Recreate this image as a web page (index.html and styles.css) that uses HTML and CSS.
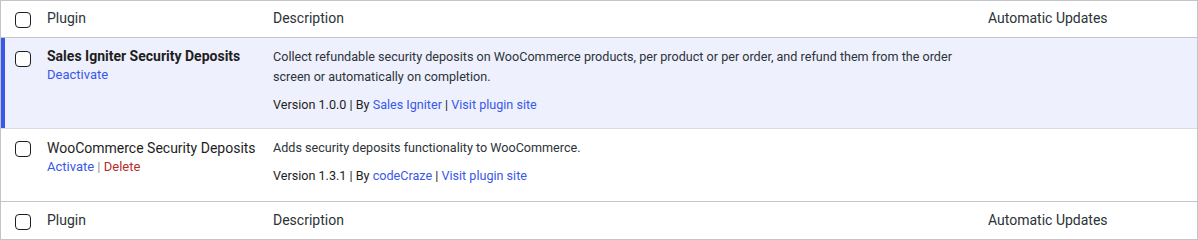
FILE: index.html
```html
<!DOCTYPE html>
<html lang="en">
<head>
  <meta charset="UTF-8">
  <meta name="viewport" content="width=device-width, initial-scale=1.0">
  <title>Plugins</title>
  <link rel="stylesheet" href="styles.css">
</head>
<body>
  <table class="plugins">
    <thead>
      <tr>
        <td class="check-column"><input type="checkbox"></td>
        <th class="col-name">Plugin</th>
        <th class="col-desc">Description</th>
        <th class="col-auto">Automatic Updates</th>
      </tr>
    </thead>
    <tbody>
      <tr class="active">
        <th class="check-column"><input type="checkbox"></th>
        <td class="plugin-title">
          <strong>Sales Igniter Security Deposits</strong>
          <div class="row-actions"><a href="#">Deactivate</a></div>
        </td>
        <td class="column-description">
          <p class="desc">Collect refundable security deposits on WooCommerce products, per product or per order, and refund them from the order screen or automatically on completion.</p>
          <p class="meta">Version 1.0.0 | By <a href="#">Sales Igniter</a> | <a href="#">Visit plugin site</a></p>
        </td>
        <td class="column-auto"></td>
      </tr>
      <tr class="inactive">
        <th class="check-column"><input type="checkbox"></th>
        <td class="plugin-title">
          <strong>WooCommerce Security Deposits</strong>
          <div class="row-actions"><a href="#">Activate</a> | <a href="#" class="delete">Delete</a></div>
        </td>
        <td class="column-description">
          <p class="desc">Adds security deposits functionality to WooCommerce.</p>
          <p class="meta">Version 1.3.1 | By <a href="#">codeCraze</a> | <a href="#">Visit plugin site</a></p>
        </td>
        <td class="column-auto"></td>
      </tr>
    </tbody>
    <tfoot>
      <tr>
        <td class="check-column"><input type="checkbox"></td>
        <th class="col-name">Plugin</th>
        <th class="col-desc">Description</th>
        <th class="col-auto">Automatic Updates</th>
      </tr>
    </tfoot>
  </table>
</body>
</html>
```

FILE: styles.css
```css
body {
  margin: 0;
  font-family: Roboto, "Liberation Sans", sans-serif;
  font-size: 13px;
  color: #1e1e1e;
  background: #fff;
}
.plugins {
  width: 1198px;
  border-collapse: separate;
  border-spacing: 0;
  border: 1px solid #c3c4c7;
  table-layout: fixed;
}
.plugins th,
.plugins td {
  box-sizing: border-box;
  text-align: left;
  font-weight: normal;
  vertical-align: top;
  padding: 0;
}
.plugins .check-column {
  width: 36px;
}
.plugins .col-name {
  width: 226px;
}
.plugins .col-desc {
  width: 715px;
}
.plugins .col-auto {
  width: 219px;
}
.plugins thead th,
.plugins tfoot th {
  font-size: 14px;
  line-height: 20px;
  padding: 7px 10px 9px;
  color: #2c3338;
}
.plugins thead td,
.plugins thead th {
  height: 37px;
  border-bottom: 1px solid #c3c4c7;
}
.plugins tfoot td,
.plugins tfoot th {
  height: 37px;
  border-top: 1px solid #c3c4c7;
}
.plugins tfoot th {
  padding-top: 8px;
}
.plugins thead .check-column,
.plugins tfoot .check-column {
  padding: 11px 0 0 14px;
}
.plugins tfoot .check-column {
  padding-top: 12px;
}
input[type="checkbox"] {
  -webkit-appearance: none;
  appearance: none;
  width: 16px;
  height: 16px;
  margin: 0;
  border: 1px solid #1e1e1e;
  border-radius: 4px;
  background: #fff;
  display: block;
}
.plugins tbody td,
.plugins tbody th {
  border-bottom: 1px solid #dcdcde;
}
.plugins tbody tr:last-child td,
.plugins tbody tr:last-child th {
  border-bottom: none;
}
.plugins tbody .check-column {
  padding: 13px 0 0 14px;
}
.plugins tbody tr.inactive .check-column {
  padding-top: 12px;
}
.plugins tr.active td,
.plugins tr.active th {
  background: #eef1fd;
}
.plugins tr.active .check-column {
  box-shadow: inset 4px 0 0 #3858e9;
}
.plugins .plugin-title {
  padding: 8px 10px 0;
  line-height: 20px;
}
.plugins tr.inactive .plugin-title {
  padding-top: 9px;
}
.plugin-title strong {
  font-size: 14px;
  font-weight: 400;
  display: block;
  white-space: nowrap;
}
tr.active .plugin-title strong {
  font-weight: 700;
}
.row-actions {
  line-height: 18px;
  color: #8c8f94;
}
a {
  color: #3858e9;
  text-decoration: none;
}
a.delete {
  color: #b32d2e;
}
.plugins .column-description {
  padding: 9px 10px 0;
  line-height: 20px;
  font-size: 12.6px;
}
.column-description p {
  margin: 0;
}
.desc {
  color: #2c3338;
}
.column-description .meta {
  margin-top: 8px;
}
.plugins tr.active .column-description {
  padding-bottom: 13px;
}
.plugins tr.inactive .column-description {
  padding-top: 9px;
  padding-bottom: 15px;
}
```
